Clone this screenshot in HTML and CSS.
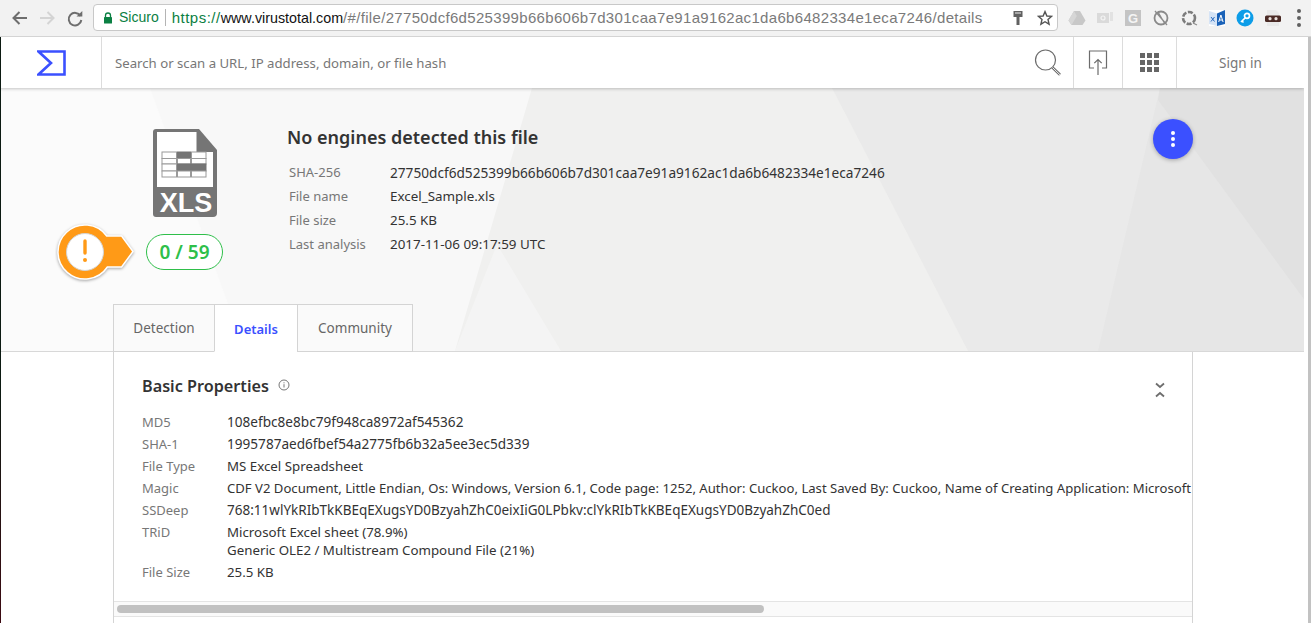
FILE: index.html
```html
<!DOCTYPE html>
<html lang="en">
<head>
<meta charset="utf-8">
<title>VirusTotal</title>
<link rel="stylesheet" href="styles.css">
</head>
<body>
<header class="chrome">
  <div class="chrome-nav">
    <svg class="chrome-btn" viewBox="0 0 28 24"><path d="M22 12H9M14.500 6l-6 6 6 6" fill="none" stroke="#6e6e6e" stroke-width="2"/></svg>
    <svg class="chrome-btn" viewBox="0 0 28 24"><path d="M7 12h13M14.500 6l6 6-6 6" fill="none" stroke="#d4d4d4" stroke-width="2"/></svg>
    <svg class="chrome-btn" viewBox="0 0 28 24"><path d="M19.500 10A6.300 6.300 0 1 0 20.300 14" fill="none" stroke="#6e6e6e" stroke-width="2"/><path d="M15.500 10.600h5.800V5z" fill="#6e6e6e"/></svg>
  </div>
  <div class="omnibox">
    <svg class="lock" viewBox="0 0 10 12"><path d="M2.500 5V3.500a2.500 2.500 0 0 1 5 0V5" fill="none" stroke="#0b8043" stroke-width="1.300"/><rect x="1" y="5" width="8" height="6.500" rx=".6" fill="#0b8043"/></svg>
    <span class="secure">Sicuro</span>
    <span class="url"><span class="url-scheme">https://</span><span class="url-host">www.virustotal.com</span>/#/file/27750dcf6d525399b66b606b7d301caa7e91a9162ac1da6b6482334e1eca7246/details</span>
    <svg class="omni-icon omni-key" viewBox="0 0 12 16"><path d="M1.500 1h9v6h-3v8h-3V7h-3z" fill="#616161"/><path d="M3 3h6" stroke="#eee" stroke-width="1"/></svg>
    <svg class="omni-icon omni-star" viewBox="0 0 16 16"><path d="M8 1.600l1.900 4.400 4.700.4-3.600 3.100 1.100 4.700L8 11.700l-4.100 2.500L5 9.500 1.400 6.400l4.700-.4z" fill="none" stroke="#555" stroke-width="1.400"/></svg>
  </div>
  <div class="extensions">
    <svg viewBox="0 0 18 18"><path d="M6 2h6l5.500 9.500L14.500 16h-11L.5 11.500z" fill="#c8c8c8"/><path d="M6 2l2.800 5L3.500 16 .5 11.500z" fill="#d6d6d6"/></svg>
    <svg viewBox="0 0 18 18"><rect x="1" y="4" width="12" height="10" fill="#dadada"/><rect x="14" y="3" width="3" height="9" fill="#e2e2e2"/><circle cx="7" cy="9" r="2" fill="none" stroke="#f4f4f4" stroke-width="1.200"/></svg>
    <svg viewBox="0 0 18 18"><rect x="1" y="1" width="16" height="16" fill="#c4c4c4"/><text x="9" y="13.500" class="ext-g">G</text></svg>
    <svg viewBox="0 0 18 18"><circle cx="9" cy="9" r="6.500" fill="none" stroke="#8a8a8a" stroke-width="1.800"/><path d="M3 2l12 14M6 3l7 12" stroke="#8a8a8a" stroke-width="1.300"/></svg>
    <svg viewBox="0 0 18 18"><circle cx="9" cy="9" r="6" fill="none" stroke="#7c7c7c" stroke-width="2.600" stroke-dasharray="5 1.600"/><path d="M13 14l4 2" stroke="#8a8a8a" stroke-width="1.200"/></svg>
    <svg viewBox="0 0 18 18"><rect x="1" y="1" width="16" height="16" fill="#fff"/><path d="M1 2l8 2.500V17l-8-2z" fill="#d6e4f6"/><path d="M9 4.500L17 1v14l-8 2z" fill="#1a62b8"/><path d="M3 8l3.500 4.500M6.500 8L3 12.500" stroke="#2a6cc0" stroke-width="1"/><path d="M10.700 13l2.200-7 2.200 7M11.500 11h2.800" stroke="#fff" stroke-width="1" fill="none"/></svg>
    <svg viewBox="0 0 18 18"><circle cx="9" cy="9" r="8.500" fill="#0d9de8"/><circle cx="11" cy="6.800" r="2.500" fill="none" stroke="#fff" stroke-width="1.700"/><path d="M9.500 8.500L5 13M6 12l1.500 1.500" stroke="#fff" stroke-width="1.700"/></svg>
    <svg viewBox="0 0 18 18"><path d="M3 1h9l3 3v13H3z" fill="#e9e9e9"/><rect x="1" y="6.500" width="16" height="6.500" rx="1.500" fill="#4a2a25"/><circle cx="6" cy="9.700" r="1.600" fill="#e8e0dc"/><circle cx="12" cy="9.700" r="1.600" fill="#e8e0dc"/></svg>
    <span class="kebab"><i></i><i></i><i></i></span>
  </div>
</header>
<div class="page">
  <div class="main">
    <nav class="topbar">
      <a class="logo-cell" href="#"><svg viewBox="0 0 29 26"><path d="M1.500 1.500h26v23h-26L14 13z" fill="none" stroke="#3b50ff" stroke-width="2.600"/></svg></a>
      <div class="search">
        <span class="search-hint">Search or scan a URL, IP address, domain, or file hash</span>
        <svg viewBox="0 0 28 28"><circle cx="11.500" cy="11" r="10" fill="none" stroke="#6c6c6c" stroke-width="1.200"/><path d="M18.500 18.500l7.500 7.300" stroke="#6c6c6c" stroke-width="2.600"/><path d="M18.500 18.500l7.500 7.300" stroke="#fff" stroke-width=".9"/></svg>
      </div>
      <a class="nav-cell nav-upload" href="#"><svg viewBox="0 0 20 26"><path d="M6 18H1.500V1h17v17H14" fill="none" stroke="#6c6c6c" stroke-width="1.200"/><path d="M10 25V9.500M6.300 13.200L10 9.500l3.700 3.700" fill="none" stroke="#6c6c6c" stroke-width="1.200"/></svg></a>
      <a class="nav-cell nav-apps" href="#"><span class="apps"><i></i><i></i><i></i><i></i><i></i><i></i><i></i><i></i><i></i></span></a>
      <a class="nav-cell nav-sign" href="#">Sign in</a>
    </nav>
    <section class="banner">
      <svg class="banner-bg" viewBox="0 0 1304 264" preserveAspectRatio="none">
        <rect width="1304" height="264" fill="#f8f8f8"/>
        <path d="M0 0h150l95 264H0z" fill="#fbfbfb"/>
        <path d="M532 0h772v264H455z" fill="#f0f0ef"/>
        <path d="M497 157l64 107H455z" fill="#f4f4f4"/>
        <path d="M832 0h472v264H968z" fill="#eaeaea"/>
        <path d="M1160 0h144v264H1098z" fill="#e6e6e6"/>
        <path d="M1160 0h144v212L1158 12z" fill="#e1e1e1"/>
      </svg>
      <div class="report">
        <div class="report-side">
          <svg class="file-icon" viewBox="0 0 64 88">
            <path d="M3 0h43l18 21v63a4 4 0 0 1-4 4H3a3 3 0 0 1-3-3V3a3 3 0 0 1 3-3z" fill="#757575"/>
            <path d="M4 3h39.500v20H60v35H4z" fill="#fff"/>
            <g class="sheet">
              <rect x="9" y="23" width="14.500" height="6.500"/><rect x="24.500" y="23" width="13" height="6.500" class="dark"/><rect x="38.500" y="23" width="14.500" height="6.500"/>
              <rect x="9" y="29.500" width="14.500" height="5.500"/><rect x="24.500" y="29.500" width="13" height="5.500"/><rect x="38.500" y="29.500" width="14.500" height="5.500"/>
              <rect x="9" y="35" width="14.500" height="7"/><rect x="24.500" y="35" width="28.500" height="7" class="dark"/>
              <rect x="9" y="42" width="14.500" height="6"/><rect x="24.500" y="42" width="13" height="6"/><rect x="38.500" y="42" width="14.500" height="6"/>
            </g>
            <text x="33" y="83" class="file-ext">XLS</text>
          </svg>
          <div class="score-row">
            <svg class="alert" viewBox="0 0 84 64">
              <path class="alert-shape" d="M51.700 15H66.600L78 30.500 66.600 46H52.400A27 27 0 1 1 51.700 15z"/>
              <circle cx="30" cy="31" r="18.500" fill="#fff" stroke="#d4d4d4" stroke-width="1"/>
              <path d="M30 20v12" stroke="#ff9a17" stroke-width="3.400" stroke-linecap="round"/>
              <circle cx="30" cy="39" r="2" fill="#ff9a17"/>
            </svg>
            <span class="score">0 / 59</span>
          </div>
        </div>
        <div class="report-info">
          <h1 class="verdict">No engines detected this file</h1>
          <dl class="facts">
            <div class="fact"><dt>SHA-256</dt><dd class="val-hash">27750dcf6d525399b66b606b7d301caa7e91a9162ac1da6b6482334e1eca7246</dd></div>
            <div class="fact"><dt>File name</dt><dd>Excel_Sample.xls</dd></div>
            <div class="fact"><dt>File size</dt><dd>25.5 KB</dd></div>
            <div class="fact"><dt>Last analysis</dt><dd>2017-11-06 09:17:59 UTC</dd></div>
          </dl>
        </div>
        <button class="fab" type="button" aria-label="More"><i></i><i></i><i></i></button>
      </div>
      <div class="tabs">
        <a class="tab tab-detection" href="#">Detection</a>
        <a class="tab tab-details is-active" href="#">Details</a>
        <a class="tab tab-community" href="#">Community</a>
      </div>
    </section>
    <section class="card">
      <div class="card-head">
        <h2 class="card-title">Basic Properties</h2>
        <svg class="info" viewBox="0 0 12 12"><circle cx="6" cy="6" r="5" fill="none" stroke="#777" stroke-width="1"/><path d="M6 5.200v3.300M6 3.300v1" stroke="#777" stroke-width="1"/></svg>
        <svg class="collapse" viewBox="0 0 10 16"><path d="M1 1.500l4 3.500 4-3.500M1 14.500L5 11l4 3.500" fill="none" stroke="#6e6e6e" stroke-width="1.800"/></svg>
      </div>
      <dl class="props">
        <div class="prop"><dt>MD5</dt><dd class="val-hash">108efbc8e8bc79f948ca8972af545362</dd></div>
        <div class="prop"><dt>SHA-1</dt><dd class="val-hash">1995787aed6fbef54a2775fb6b32a5ee3ec5d339</dd></div>
        <div class="prop"><dt>File Type</dt><dd>MS Excel Spreadsheet</dd></div>
        <div class="prop"><dt>Magic</dt><dd class="val-long">CDF V2 Document, Little Endian, Os: Windows, Version 6.1, Code page: 1252, Author: Cuckoo, Last Saved By: Cuckoo, Name of Creating Application: Microsoft</dd></div>
        <div class="prop"><dt>SSDeep</dt><dd class="val-deep">768:11wlYkRIbTkKBEqEXugsYD0BzyahZhC0eixIiG0LPbkv:clYkRIbTkKBEqEXugsYD0BzyahZhC0ed</dd></div>
        <div class="prop"><dt>TRiD</dt><dd>Microsoft Excel sheet (78.9%)<br>Generic OLE2 / Multistream Compound File (21%)</dd></div>
        <div class="prop"><dt>File Size</dt><dd>25.5 KB</dd></div>
      </dl>
      <div class="hscroll"><span class="hscroll-thumb"></span></div>
    </section>
  </div>
  <div class="edge"></div>
</div>
</body>
</html>
```
FILE: styles.css
```css
* { box-sizing: border-box; }
html, body { height: 100%; }
body { margin: 0; overflow: hidden; background: #fff; font-family: "Noto Sans", sans-serif; color: #333; }
a { text-decoration: none; color: inherit; }
dl, dd, dt, h1, h2 { margin: 0; font-weight: normal; }

.chrome { height: 37px; display: flex; align-items: center; background: #f2f2f2; border-bottom: 1px solid #d4d4d4; }
.chrome-nav { width: 93px; display: flex; padding-left: 5px; }
.chrome-btn { width: 28px; height: 24px; }
.omnibox { width: 965px; height: 27px; margin-top: -1px; display: flex; align-items: center; background: #fff; border: 1px solid #c8c8c8; border-radius: 4px; padding-left: 9px; font: 14px "Liberation Sans", Arial, sans-serif; white-space: nowrap; }
.lock { width: 10px; height: 12px; }
.secure { color: #0b8043; margin-left: 6px; padding-right: 6px; border-right: 1px solid #b4b4b4; line-height: 17px; }
.url { color: #7a7a7a; margin-left: 6px; font-size: 15px; letter-spacing: .32px; }
.url-scheme { color: #0b8043; letter-spacing: .5px; }
.url-host { color: #111; font-size: 14.3px; letter-spacing: 0; }
.omni-icon { height: 16px; }
.omni-key { width: 12px; margin-left: 29px; }
.omni-star { width: 16px; margin-left: 13px; }
.extensions { flex: 1; display: flex; align-items: center; gap: 10px; padding-left: 10px; }
.extensions svg { width: 18px; height: 18px; flex: none; }
.ext-g { font: bold 13px "Liberation Sans", sans-serif; fill: #f4f4f4; text-anchor: middle; }
.kebab { display: flex; flex-direction: column; gap: 3px; margin-left: 5px; }
.kebab i { width: 4px; height: 4px; border-radius: 50%; background: #606060; }

.page { position: relative; display: flex; height: 586px; }
.page::before { content: ""; position: absolute; z-index: 3; left: 0; top: 0; bottom: 0; width: 1px; background: linear-gradient(#0c1a12 60%, #3c0a12); }
.main { width: 1304px; overflow: hidden; }
.edge { flex: 1; background: #fff; border-right: 3px solid #c2c2c2; }

.topbar { position: relative; z-index: 2; height: 51px; display: flex; background: #fff; box-shadow: 0 1px 3px rgba(0, 0, 0, .22); }
.logo-cell { width: 102px; display: flex; padding: 13px 0 0 37px; border-right: 1px solid #dcdcdc; }
.logo-cell svg { width: 29px; height: 26px; }
.search { flex: 1; display: flex; align-items: center; justify-content: space-between; padding: 0 11px 0 13px; }
.search svg { width: 28px; height: 28px; margin-top: 1px; }
.search-hint { font-size: 13.2px; color: #777; }
.nav-cell { display: flex; align-items: center; justify-content: center; border-left: 1px solid #dcdcdc; }
.nav-upload { width: 49px; }
.nav-upload svg { width: 20px; height: 26px; margin-top: 1px; }
.nav-apps { width: 54px; }
.nav-sign { width: 128px; font-size: 13.5px; color: #777; }
.apps { display: grid; grid-template-columns: repeat(3, 5px); gap: 2px 2px; }
.apps i { width: 5px; height: 5px; background: #666; }

.banner { position: relative; height: 264px; display: flex; flex-direction: column; border-bottom: 1px solid #d8d8d8; }
.banner-bg { position: absolute; inset: 0; width: 100%; height: 100%; }
.report { position: relative; flex: 1; display: flex; padding: 41px 111px 0 58px; }
.report-side { width: 229px; }
.file-icon { display: block; width: 64px; height: 88px; margin-left: 95px; }
.sheet rect { fill: #fff; stroke: #9a9a9a; stroke-width: 1; }
.sheet rect.dark { fill: #757575; stroke: #757575; }
.file-ext { font: bold 27px "Liberation Sans", Arial, sans-serif; fill: #fff; text-anchor: middle; }
.score-row { display: flex; align-items: center; margin: 1px 0 0 -3px; }
.alert { width: 84px; height: 64px; flex: none; margin-top: 3px; }
.alert-shape { fill: #ff9a17; stroke: #fff; stroke-width: 1.500; filter: drop-shadow(0 1px 1.500px rgba(0, 0, 0, .35)); }
.score { margin-left: 7px; width: 77px; height: 36px; display: flex; align-items: center; justify-content: center; border: 1px solid #2fbf4a; border-radius: 18px; background: #fff; color: #2fbf4a; font-size: 19px; font-weight: 600; }
.report-info { flex: 1; }
.verdict { font-size: 18px; font-weight: 600; line-height: 24px; color: #333; margin-top: -4px; }
.facts { margin-top: 11px; padding-left: 2px; font-size: 13px; }
.fact { display: flex; height: 24px; align-items: center; }
.fact dt { width: 101px; color: #777; }
.fact dd { color: #333; font-size: 13.4px; }
.fact dd.val-hash { font-size: 13.65px; }
.fab { width: 40px; height: 40px; margin-top: -10px; padding: 0; border: 0; border-radius: 50%; background: #3b50ff; box-shadow: 0 1px 4px rgba(0, 0, 0, .3); display: flex; flex-direction: column; align-items: center; justify-content: center; gap: 2px; }
.fab i { width: 4px; height: 4px; border-radius: 50%; background: #fff; }
.tabs { position: relative; display: flex; margin: 0 0 -1px 113px; height: 48px; }
.tab { display: flex; align-items: center; justify-content: center; background: #fafafa; border: 1px solid #d4d4d4; font-size: 13.5px; color: #666; margin-left: -1px; }
.tab-detection { width: 102px; margin-left: 0; }
.tab-details { width: 84px; }
.tab-community { width: 116px; }
.tab.is-active { background: #fff; border-bottom-color: #fff; color: #3b50ff; font-size: 13px; font-weight: 600; padding-top: 1px; }

.card { margin-left: 113px; width: 1080px; height: 271px; border: 1px solid #d4d4d4; border-width: 0 1px; display: flex; flex-direction: column; overflow: hidden; }
.card-head { display: flex; align-items: center; height: 59px; padding: 8px 27px 0 28px; }
.card-title { font-size: 16.2px; font-weight: 600; color: #333; }
.info { width: 12px; height: 12px; margin: -2px 0 0 9px; }
.collapse { width: 10px; height: 16px; margin: 8px 0 0 auto; }
.props { flex: 1; padding-left: 28px; font-size: 13px; line-height: 18px; }
.prop { display: flex; padding: 2px 0; }
.prop dt { width: 85px; flex: none; color: #777; }
.prop dd { white-space: nowrap; color: #333; font-size: 13.3px; }
.prop dd.val-hash { font-size: 13.6px; }
.prop dd.val-deep { font-size: 13.53px; }
.prop dd.val-long { font-size: 13.12px; }
.hscroll { height: 16px; padding: 3px 3px; background: #fafafa; border: 1px solid #e4e4e4; border-width: 1px 0; flex: none; margin-bottom: 6px; }
.hscroll-thumb { display: block; width: 647px; height: 8px; border-radius: 4px; background: #c1c1c1; }
```
